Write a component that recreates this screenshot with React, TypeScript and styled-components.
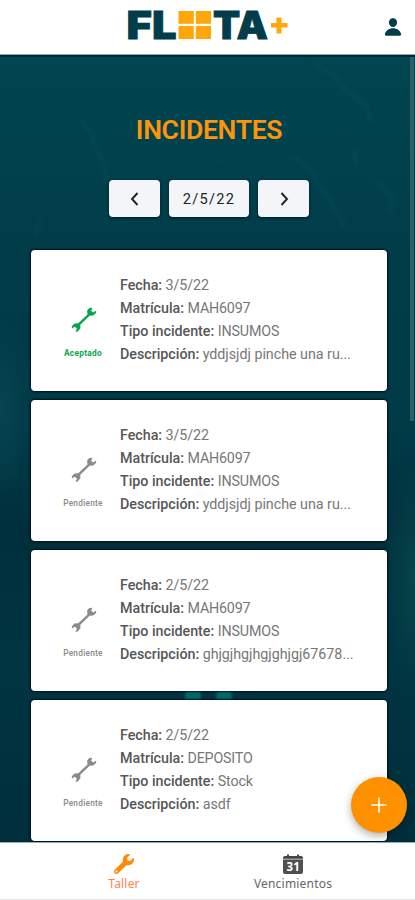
import React from "react";
import styled, { createGlobalStyle } from "styled-components";
import { FaWrench } from "react-icons/fa";
import { IoPerson } from "react-icons/io5";

const GlobalStyle = createGlobalStyle`
  * { box-sizing: border-box; }
  body { margin: 0; font-family: Roboto, "Liberation Sans", sans-serif; background: #003c48; }
`;

const Screen = styled.div`
  height: 900px;
  display: flex;
  flex-direction: column;
  overflow: hidden;
  position: relative;
`;

const Header = styled.header`
  height: 55px;
  flex: none;
  background: #fff;
  display: grid;
  grid-template-columns: 50px 1fr 50px;
  border-bottom: 1px solid #8fa6ad;
`;

const LogoArt = styled.svg`
  grid-column: 2;
  width: 315px;
  height: 54px;
  display: block;
`;

const ProfileButton = styled.button`
  border: 0;
  padding: 0 0 1px 6px;
  background: none;
  color: #033c4a;
  display: flex;
  align-items: center;
  justify-content: center;
  font-size: 20px;
`;

const Content = styled.main`
  flex: 1;
  min-height: 0;
  overflow: hidden;
  display: flex;
  flex-direction: column;
  align-items: center;
  border-top: 2px solid #00293a;
  position: relative;
  background:
    radial-gradient(circle at 193px 639px, #04686b 0 6px, transparent 10px),
    radial-gradient(circle at 224px 639px, #04686b 0 6px, transparent 10px),
    radial-gradient(ellipse 34px 120px at 100% 66%, #06454c, transparent),
    radial-gradient(ellipse 32px 90px at 0 45%, #05454f, transparent),
    linear-gradient(#00454f 0%, #003d49 25%, #003a47 48%, #002f3c 60%, #003541 77%, #002e3c 100%);
`;

const Texture = styled.svg`
  position: absolute;
  left: 0;
  top: 0;
  width: 415px;
  height: 200px;
  filter: blur(2px);
`;

const ScrollThumb = styled.div`
  position: absolute;
  right: 1px;
  top: 0;
  width: 4px;
  height: 364px;
  background: #2f5f66;
`;

const Title = styled.h1`
  margin: 57px 0 0;
  padding-left: 3px;
  height: 32px;
  line-height: 32px;
  font-size: 26.6px;
  font-weight: 600;
  letter-spacing: -0.35px;
  color: #ff9409;
  position: relative;
`;

const DateBar = styled.div`
  margin-top: 34px;
  padding-left: 3px;
  display: flex;
  gap: 9px;
  position: relative;
`;

const DateButton = styled.button<{ $width: number }>`
  width: ${(p) => p.$width}px;
  height: 37px;
  padding: 0;
  border: 0;
  border-radius: 4px;
  background: #f4f5f9;
  color: #222;
  box-shadow: 0 1px 3px rgba(0, 15, 30, 0.8);
  font: 400 14.6px Roboto, sans-serif;
  letter-spacing: 1.3px;
  display: flex;
  align-items: center;
  justify-content: center;
`;

const CardList = styled.div`
  margin-top: 33px;
  margin-left: 3px;
  width: 356px;
  display: flex;
  flex-direction: column;
  gap: 9px;
  position: relative;
`;

const Card = styled.article`
  height: 141px;
  flex: none;
  background: #fff;
  border-radius: 4px;
  box-shadow: 0 0 2px 1px rgba(0, 10, 24, 0.9);
  display: grid;
  grid-template-columns: 89px 1fr;
`;

const Status = styled.div<{ $accepted?: boolean }>`
  display: flex;
  flex-direction: column;
  align-items: center;
  padding: 57px 0 0 15px;
  color: ${(p) => (p.$accepted ? "#08a54d" : "#8b8b8b")};
  svg { width: 26px; height: 26px; margin-left: 2px; }
`;

const StatusLabel = styled.span<{ $accepted?: boolean }>`
  margin-top: 15px;
  font-size: 8.3px;
  line-height: 11px;
  font-weight: ${(p) => (p.$accepted ? 700 : 500)};
  letter-spacing: ${(p) => (p.$accepted ? "0.3px" : "0.25px")};
`;

const Details = styled.dl`
  margin: 0;
  padding-top: 23.5px;
  min-width: 0;
`;

const Field = styled.div`
  height: 23.3px;
  line-height: 23.3px;
  font-size: 14.3px;
  white-space: nowrap;
  color: #777;
  dt { display: inline; font-weight: 500; color: #575757; letter-spacing: -0.03px; }
  dd { display: inline; margin: 0 0 0 3.5px; }
`;

const Value = styled.dd<{ $tracking?: number }>`
  letter-spacing: ${(p) => p.$tracking ?? -0.03}px;
`;

const AddButton = styled.button`
  position: absolute;
  left: 351px;
  top: 777px;
  width: 56px;
  height: 56px;
  padding: 0;
  border: 0;
  border-radius: 50%;
  background: #ff9100;
  box-shadow: 0 3px 9px rgba(0, 0, 0, 0.32);
  display: flex;
  align-items: center;
  justify-content: center;
`;

const TabBar = styled.nav`
  height: 58px;
  flex: none;
  background: #fff;
  border-top: 1px solid #9aabb0;
  border-bottom: 1px solid #e6e6e6;
  display: grid;
  grid-template-columns: 169px 169px;
  justify-content: center;
  padding-left: 2px;
`;

const Tab = styled.button<{ $active?: boolean }>`
  border: 0;
  padding: 11px 0 0;
  background: none;
  display: flex;
  flex-direction: column;
  align-items: center;
  color: ${(p) => (p.$active ? "#ff8a0a" : "#555")};
  svg { width: 20px; height: 20px; }
`;

const TabLabel = styled.span<{ $active?: boolean }>`
  margin-top: 2px;
  font: 400 12px/16px "Noto Sans", sans-serif;
  letter-spacing: 0.2px;
  color: ${(p) => (p.$active ? "#ff8550" : "#666")};
`;

const Logo = () => (
  <LogoArt viewBox="50 0 315 54" role="img" aria-label="Fleeta+">
    <g fill="#033d4b" stroke="#033d4b" strokeWidth="0.8" fontFamily="Inter, sans-serif" fontWeight="900" fontSize="38">
      <text x="126.5" y="38.8" textLength="50" lengthAdjust="spacingAndGlyphs">FL</text>
      <text x="213" y="38.8" textLength="55" lengthAdjust="spacingAndGlyphs">TA</text>
    </g>
    <g fill="#ffa60a">
      <rect x="178.5" y="11" width="15.3" height="12.8" />
      <rect x="195.8" y="11" width="15.2" height="12.8" />
      <rect x="178.5" y="26" width="15.3" height="13" />
      <rect x="195.8" y="26" width="15.2" height="13" />
      <path d="M276.5 17.5h5v5.5h6v4.5h-6v6h-5v-6h-5.5V23h5.5z" />
    </g>
  </LogoArt>
);

const Spanner = () => (
  <svg viewBox="0 0 26 26" fill="currentColor">
    <path d="M18.2 1 16.1 3.6l.4 3.800L7.300 16.200l-3.800.3L.8 19.200l.2 2.200 2.700-1.600 2.200 1.800-1.400 3.200 2.300-.4 2.600-3.100-.1-3.500 9.300-9 3.600-.2L25 5.900l.2-2.300-3 1.900-2-1.800L21.300.8z" />
  </svg>
);

const CalendarIcon = () => (
  <svg viewBox="0 0 20 20">
    <path fill="#444" d="M2 2h2V.5h2V2h8V.5h2V2h2a2 2 0 0 1 2 1.500V5H0V3.500A2 2 0 0 1 2 2z" />
    <path fill="#999" d="M0 4.500h20V6H0z" />
    <path fill="#505050" d="M0 6h20v12a2 2 0 0 1-2 2H2a2 2 0 0 1-2-2z" />
    <text x="10.2" y="16.800" fill="#fff" fontFamily="Noto Sans, sans-serif" fontSize="11.500" fontWeight="700" textAnchor="middle">31</text>
  </svg>
);

const Chevron = ({ d }: { d: string }) => (
  <svg width="16" height="16" viewBox="0 0 16 16" fill="none" stroke="#222" strokeWidth="1.900">
    <path d={d} />
  </svg>
);

type Incident = {
  date: string;
  plate: string;
  kind: string;
  text: string;
  accepted?: boolean;
};

const incidents: Incident[] = [
  { date: "3/5/22", plate: "MAH6097", kind: "INSUMOS", text: "yddjsjdj pinche una ru...", accepted: true },
  { date: "3/5/22", plate: "MAH6097", kind: "INSUMOS", text: "yddjsjdj pinche una ru..." },
  { date: "2/5/22", plate: "MAH6097", kind: "INSUMOS", text: "ghjgjhgjhgjghjgj67678..." },
  { date: "2/5/22", plate: "DEPOSITO", kind: "Stock", text: "asdf" },
];

const IncidentCard = ({ item }: { item: Incident }) => (
  <Card>
    <Status $accepted={item.accepted}>
      <Spanner />
      <StatusLabel $accepted={item.accepted}>{item.accepted ? "Aceptado" : "Pendiente"}</StatusLabel>
    </Status>
    <Details>
      <Field><dt>Fecha:</dt><Value $tracking={-0.1}>{item.date}</Value></Field>
      <Field><dt>Matrícula:</dt><Value $tracking={-0.2}>{item.plate}</Value></Field>
      <Field><dt>Tipo incidente:</dt><Value $tracking={-0.15}>{item.kind}</Value></Field>
      <Field><dt>Descripción:</dt><Value>{item.text}</Value></Field>
    </Details>
  </Card>
);

export default function App() {
  return (
    <>
      <GlobalStyle />
      <Screen>
        <Header>
          <Logo />
          <ProfileButton aria-label="Perfil"><IoPerson /></ProfileButton>
        </Header>
        <Content>
          <Texture viewBox="0 0 415 200" fill="none" stroke="#24747a" strokeOpacity="0.17" strokeWidth="3">
            <path d="M80 64l12 12 4 18 9 12v20M315 7l20 12 12 16 18 12 6 18M290 98l20 14 8 14 12 18 15 26M376 125l15 14v17M35 180l6-20M218 102l4 3M343 76l2 4M355 90v18" />
          </Texture>
          <ScrollThumb />
          <Title>INCIDENTES</Title>
          <DateBar>
            <DateButton $width={51} aria-label="Anterior"><Chevron d="M10.500 2 5 8l5.500 6" /></DateButton>
            <DateButton $width={80}>2/5/22</DateButton>
            <DateButton $width={51} aria-label="Siguiente"><Chevron d="M5.500 2 11 8l-5.500 6" /></DateButton>
          </DateBar>
          <CardList>
            {incidents.map((item, i) => <IncidentCard key={i} item={item} />)}
          </CardList>
        </Content>
        <TabBar>
          <Tab $active><FaWrench /><TabLabel $active>Taller</TabLabel></Tab>
          <Tab><CalendarIcon /><TabLabel>Vencimientos</TabLabel></Tab>
        </TabBar>
        <AddButton aria-label="Agregar">
          <svg width="16" height="16" viewBox="0 0 16 16" stroke="#fff" strokeWidth="1.600"><path d="M8 .5v15M.5 8h15" /></svg>
        </AddButton>
      </Screen>
    </>
  );
}
